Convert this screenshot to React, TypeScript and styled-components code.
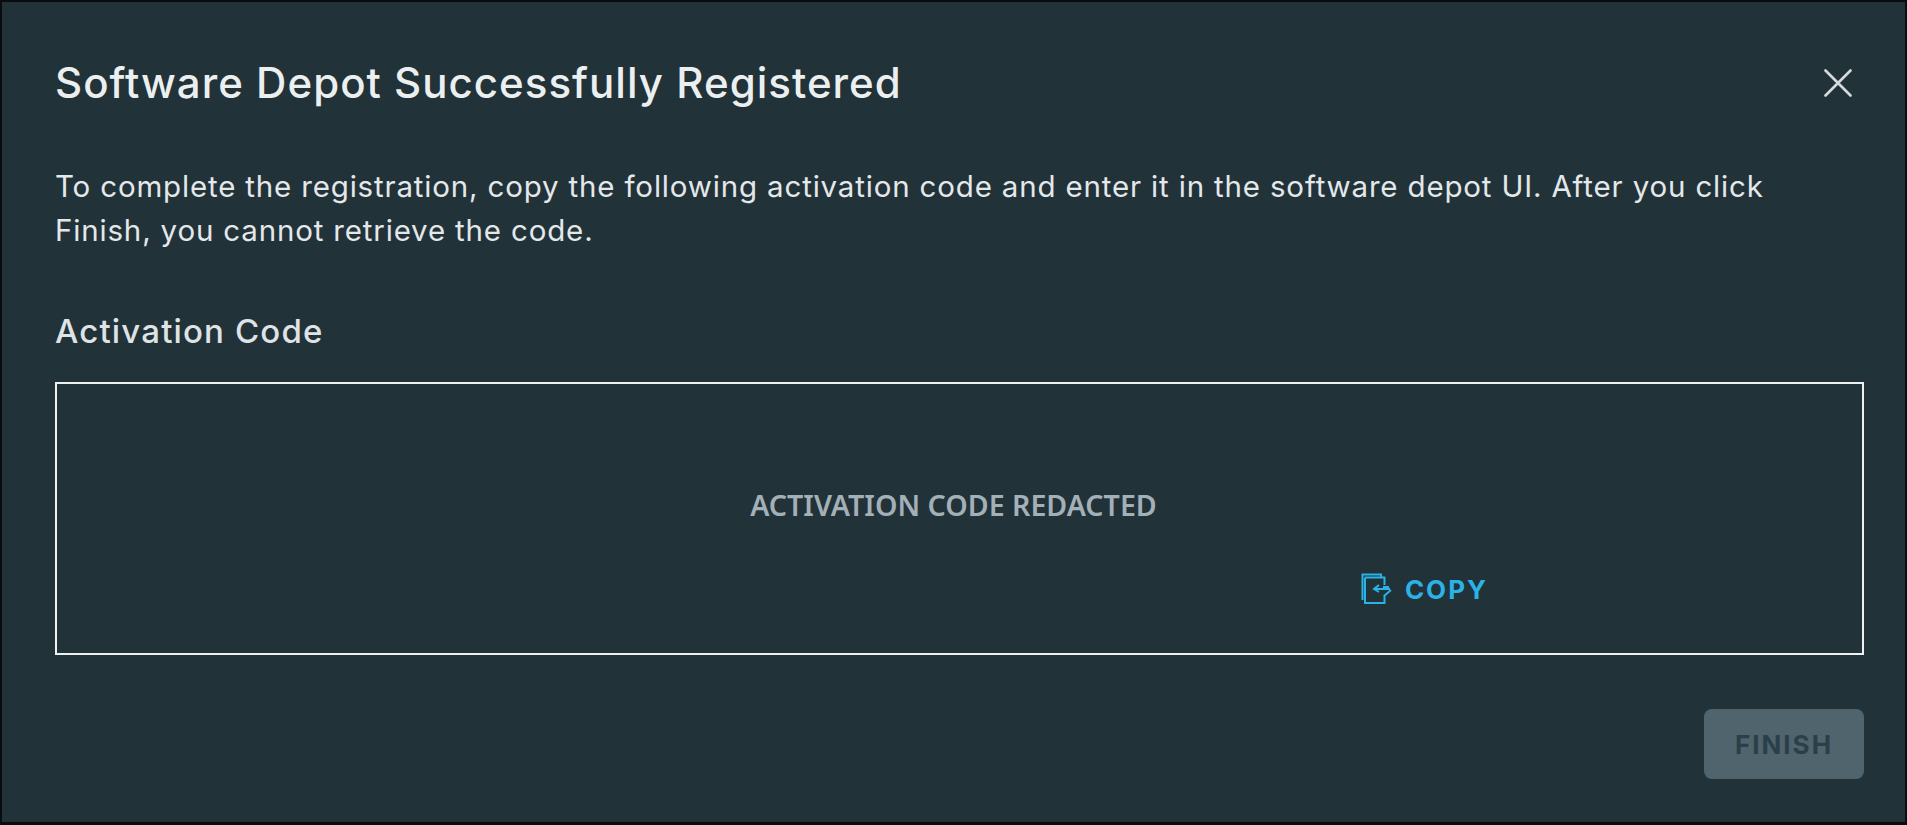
import styled, { createGlobalStyle } from "styled-components";

const Global = createGlobalStyle`
    html, body {
        margin: 0;
        height: 100%;
        background: #0a0d0f;
    }
    #root {
        height: 100%;
    }
`
const Page = styled.div`
    box-sizing: border-box;
    width: 1907px;
    height: 825px;
    padding: 2px 2px 3px 2px;
    font-family: Inter, "Noto Sans", sans-serif;
`
const Dialog = styled.div`
    box-sizing: border-box;
    height: 100%;
    background-color: #223239;
    padding: 52px 41px 0 53px;
    display: flex;
    flex-direction: column;
`
const Header = styled.div`
    display: flex;
    justify-content: space-between;
    align-items: center;
    height: 56px;
`
const Title = styled.h1`
    margin: 0;
    font-size: 42px;
    font-weight: 500;
    letter-spacing: 1.03px;
    color: #eceff0;
`
const CloseButton = styled.button`
    background: none;
    border: 0;
    padding: 2px 0 0;
    margin-right: 12px;
    display: flex;
    color: #d5dadc;
`
const Message = styled.p`
    margin: 54px 0 0;
    width: 1780px;
    font-size: 29.5px;
    line-height: 44px;
    font-weight: 400;
    letter-spacing: 0.83px;
    color: #e4e8ea;
`
const Label = styled.h2`
    margin: 57px 0 0;
    font-size: 33px;
    line-height: 44px;
    font-weight: 500;
    letter-spacing: 1.15px;
    color: #dfe3e5;
`
const CodeBox = styled.div`
    box-sizing: border-box;
    margin-top: 29px;
    height: 273px;
    border: 2px solid #eef1f2;
    display: flex;
    flex-direction: column;
    align-items: center;
`
const RedactedText = styled.div`
    margin: 103px 12px 0 0;
    font-family: "Noto Sans", sans-serif;
    font-size: 28.6px;
    line-height: 36px;
    font-weight: 600;
    color: #a3b0b7;
`
const CopyRow = styled.div`
    align-self: flex-end;
    margin: 50px 374px 0 0;
    display: flex;
    align-items: center;
    gap: 13px;
    color: #2bb3e6;
`
const CopyText = styled.span`
    font-size: 26px;
    font-weight: 700;
    letter-spacing: 2px;
`
const Footer = styled.div`
    display: flex;
    justify-content: flex-end;
    margin-top: 54px;
`
const FinishButton = styled.button`
    width: 160px;
    height: 70px;
    border: 0;
    border-radius: 8px;
    background-color: #4f646d;
    color: #2b3f48;
    font-family: Inter, sans-serif;
    font-size: 26px;
    font-weight: 700;
    letter-spacing: 2px;
`

const CopyIcon = () => (
    <svg width="31" height="32" viewBox="0 0 31 32" fill="none" stroke="currentColor" strokeWidth="2">
        <path d="M1.5 27V1.5H20V4.5" />
        <path d="M4 4.5H23.5V12M23.5 22V30H4V4.5" />
        <path d="M18 12L13 16L18 19M13 16H29M22 14H28M30 17L23 23" />
    </svg>
)

const CloseIcon = () => (
    <svg width="28" height="28" viewBox="0 0 28 28" stroke="currentColor" strokeWidth="2.6" strokeLinecap="round">
        <path d="M1.5 1.5L26.5 26.5M26.5 1.5L1.5 26.5" />
    </svg>
)

const App = () => {
    return (
        <Page>
            <Global />
            <Dialog>
                <Header>
                    <Title>Software Depot Successfully Registered</Title>
                    <CloseButton><CloseIcon /></CloseButton>
                </Header>
                <Message>
                    To complete the registration, copy the following activation code and enter it in the software depot UI. After you click Finish, you cannot retrieve the code.
                </Message>
                <Label>Activation Code</Label>
                <CodeBox>
                    <RedactedText>ACTIVATION CODE REDACTED</RedactedText>
                    <CopyRow>
                        <CopyIcon />
                        <CopyText>COPY</CopyText>
                    </CopyRow>
                </CodeBox>
                <Footer>
                    <FinishButton disabled>FINISH</FinishButton>
                </Footer>
            </Dialog>
        </Page>
    )
}

export default App;
